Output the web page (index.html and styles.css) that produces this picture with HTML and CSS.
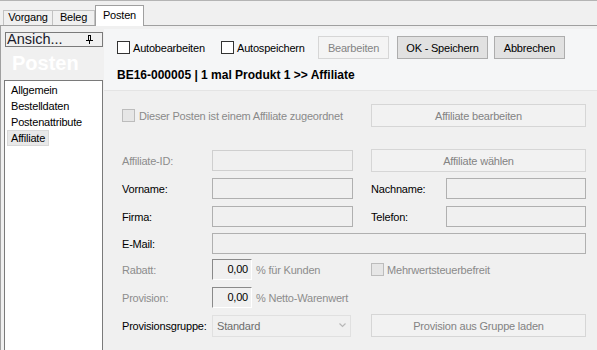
FILE: index.html
```html
<!DOCTYPE html>
<html lang="de">
<head>
<meta charset="utf-8">
<title>Posten</title>
<link rel="stylesheet" href="styles.css">
</head>
<body>
<div class="window">
  <div class="tabstrip">
    <div class="tab tab-vorgang">Vorgang</div>
    <div class="tab tab-beleg">Beleg</div>
    <div class="tab tab-posten active">Posten</div>
  </div>
  <div class="page">
    <aside class="side">
      <div class="ansicht">
        <span>Ansich...</span>
        <svg class="pin" width="7" height="9" viewBox="0 0 7 9"><rect x="2" y="0" width="3" height="1" fill="#000"/><rect x="2" y="0" width="1" height="5" fill="#000"/><rect x="4" y="0" width="1" height="5" fill="#000"/><rect x="0" y="5" width="7" height="1" fill="#000"/><rect x="3" y="6" width="1" height="3" fill="#000"/></svg>
      </div>
      <div class="side-title">Posten</div>
      <ul class="nav">
        <li><span>Allgemein</span></li>
        <li><span>Bestelldaten</span></li>
        <li><span>Postenattribute</span></li>
        <li><span class="sel">Affiliate</span></li>
      </ul>
    </aside>
    <main class="main">
      <div class="toolbar">
        <div class="tb-row">
          <label class="chk chk-auto1"><span class="box"></span>Autobearbeiten</label>
          <label class="chk chk-auto2"><span class="box"></span>Autospeichern</label>
          <button class="btn btn-bearb" disabled>Bearbeiten</button>
          <button class="btn btn-ok">OK - Speichern</button>
          <button class="btn btn-abbr">Abbrechen</button>
        </div>
        <div class="heading">BE16-000005 | 1 mal Produkt 1 &gt;&gt; Affiliate</div>
      </div>
      <div class="form">
        <div class="row row-1">
          <label class="chk dis span-3"><span class="box"></span>Dieser Posten ist einem Affiliate zugeordnet</label>
          <button class="btn wide" disabled>Affiliate bearbeiten</button>
        </div>
        <div class="row row-2">
          <span class="lbl dis">Affiliate-ID:</span>
          <span class="field dis"></span>
          <span></span>
          <button class="btn wide" disabled>Affiliate wählen</button>
        </div>
        <div class="row row-3">
          <span class="lbl">Vorname:</span>
          <span class="field"></span>
          <span></span>
          <span class="lbl">Nachname:</span>
          <span class="field"></span>
        </div>
        <div class="row row-4">
          <span class="lbl">Firma:</span>
          <span class="field"></span>
          <span></span>
          <span class="lbl">Telefon:</span>
          <span class="field"></span>
        </div>
        <div class="row row-5">
          <span class="lbl">E-Mail:</span>
          <span class="field full"></span>
        </div>
        <div class="row row-6">
          <span class="lbl dis">Rabatt:</span>
          <span class="numcell"><span class="num">0,00</span><span class="unit">% für Kunden</span></span>
          <label class="chk dis span-2"><span class="box"></span>Mehrwertsteuerbefreit</label>
        </div>
        <div class="row row-7">
          <span class="lbl dis">Provision:</span>
          <span class="numcell"><span class="num">0,00</span><span class="unit">% Netto-Warenwert</span></span>
        </div>
        <div class="row row-8">
          <span class="lbl">Provisionsgruppe:</span>
          <span class="combo"><span>Standard</span><svg width="7" height="5" viewBox="0 0 7 5"><path d="M0.5 0.5 L3.5 3.5 L6.5 0.5" fill="none" stroke="#b8b8b8" stroke-width="1.2"/></svg></span>
          <span></span>
          <button class="btn wide" disabled>Provision aus Gruppe laden</button>
        </div>
      </div>
    </main>
  </div>
</div>
</body>
</html>
```
FILE: styles.css
```css
* { box-sizing: border-box; }
html, body { margin: 0; padding: 0; }
body {
  width: 597px;
  height: 350px;
  overflow: hidden;
  background: #f0f0f0;
  font-family: "Liberation Sans", Arial, sans-serif;
  font-size: 11px;
  letter-spacing: -0.2px;
  color: #000;
}
.window {
  height: 350px;
  border-top: 1px solid #b4b4b4;
  display: flex;
  flex-direction: column;
  overflow: hidden;
}
.tabstrip {
  flex: none;
  height: 25px;
  display: flex;
  align-items: flex-end;
  padding-left: 3px;
  border-bottom: 1px solid #a0a0a0;
}
.tab {
  height: 15px;
  border: 1px solid #c2c2c2;
  border-bottom: none;
  line-height: 13px;
  text-align: center;
  background: #f0f0f0;
}
.tab-vorgang { width: 50px; }
.tab-beleg { width: 43px; margin-left: -1px; }
.tab-posten { width: 49px; }
.tab.active {
  height: 21px;
  margin-bottom: -1px;
  background: #fff;
  border-color: #a0a0a0;
  line-height: 18px;
  position: relative;
  z-index: 1;
}
.page {
  flex: 1;
  min-height: 0;
  display: flex;
  border-left: 1px solid #a0a0a0;
}
.side {
  flex: none;
  width: 103px;
  padding: 6px 0 0 4px;
  display: flex;
  flex-direction: column;
}
.ansicht {
  height: 15px;
  width: 98px;
  border: 1px solid #7a7a7a;
  display: flex;
  align-items: center;
  justify-content: space-between;
  padding: 0 9px 0 1px;
  font-size: 14.5px;
  letter-spacing: 0;
  line-height: 13px;
  color: #1a1a2a;
}
.pin { display: block; }
.side-title {
  margin-top: 6px;
  padding-left: 7px;
  height: 20px;
  font-size: 20px;
  letter-spacing: 0;
  line-height: 20px;
  font-weight: bold;
  color: #fff;
}
.nav {
  list-style: none;
  margin: 7px 0 0 -1px;
  padding: 1px 0 0 2px;
  width: 99px;
  height: 300px;
  flex: none;
  background: #fff;
  border: 1px solid #7a7a7a;
}
.nav li { height: 16px; }
.nav li span {
  display: inline-block;
  height: 16px;
  line-height: 14px;
  padding: 0 3px;
  border: 1px solid transparent;
}
.nav li span.sel {
  background: #e8e8e8;
  border-color: #d8d8d8;
}
.main {
  flex: 1;
  min-width: 0;
  padding-top: 3px;
  display: flex;
  flex-direction: column;
}
.toolbar {
  flex: none;
  height: 62px;
  background: #f5f6f7;
  border-bottom: 1px solid #e4e4e4;
  padding: 7px 0 0 13px;
}
.tb-row {
  display: flex;
  align-items: center;
  height: 23px;
}
.chk {
  display: flex;
  align-items: center;
  white-space: nowrap;
}
.chk .box {
  width: 13px;
  height: 13px;
  border: 1px solid #333;
  background: #fff;
  margin-right: 3px;
  flex: none;
}
.chk-auto1 { width: 104px; }
.chk-auto2 { width: 97px; }
.chk.dis { color: #8a8a8a; }
.chk.dis .box {
  background: #e6e6e6;
  border-color: #bcbcbc;
}
.btn {
  font-family: inherit;
  font-size: 11px;
  letter-spacing: -0.2px;
  height: 23px;
  padding: 0;
  border: 1px solid #adadad;
  background: #e1e1e1;
  color: #000;
  border-radius: 0;
}
.btn:disabled {
  background: #f2f2f2;
  border-color: #d6d6d6;
  color: #838383;
}
.toolbar .btn:disabled { background: #f4f4f4; }
.btn-bearb { width: 71px; }
.btn-ok { width: 91px; margin-left: 8px; }
.btn-abbr { width: 71px; margin-left: 6px; }
.heading {
  margin-top: 9px;
  font-size: 12px;
  letter-spacing: 0;
  line-height: 14px;
  font-weight: bold;
}
.form {
  padding: 13px 0 0 18px;
}
.row {
  display: grid;
  grid-template-columns: 90px 141px 18px 75px 140px;
  align-items: center;
}
.span-3 { grid-column: 1 / 4; }
.span-2 { grid-column: 4 / 6; }
.wide { grid-column: 4 / 6; width: 215px; }
.row-1 { height: 23px; }
.row-1 .chk .box { margin-right: 4px; }
.row-2 { height: 23px; margin-top: 22px; }
.row-3 { height: 21px; margin-top: 6px; }
.row-4 { height: 21px; margin-top: 7px; }
.row-5 { height: 21px; margin-top: 6px; }
.row-6 { height: 21px; margin-top: 5px; }
.row-7 { height: 21px; margin-top: 7px; }
.row-8 { height: 23px; margin-top: 6px; }
.lbl { white-space: nowrap; }
.lbl.dis { color: #8d8d8d; }
.field {
  display: block;
  height: 21px;
  border: 1px solid #b0b0b0;
  background: #f0f0f0;
}
.field.dis { border-color: #cfcfcf; }
.field.full { grid-column: 2 / 6; }
.numcell {
  display: flex;
  align-items: center;
  white-space: nowrap;
  grid-column: 2 / 4;
}
.num {
  width: 40px;
  height: 21px;
  line-height: 19px;
  text-align: right;
  padding-right: 3px;
  border: 1px solid;
  border-color: #8a8a8a #ffffff #ffffff #8a8a8a;
  background: #f0f0f0;
  margin-right: 4px;
}
.unit { color: #8d8d8d; }
.combo {
  height: 22px;
  width: 139px;
  border: 1px solid #e0e0e0;
  display: flex;
  align-items: center;
  justify-content: space-between;
  padding: 0 4px 0 4px;
  color: #6d6d6d;
}
.combo svg { display: block; }
```
